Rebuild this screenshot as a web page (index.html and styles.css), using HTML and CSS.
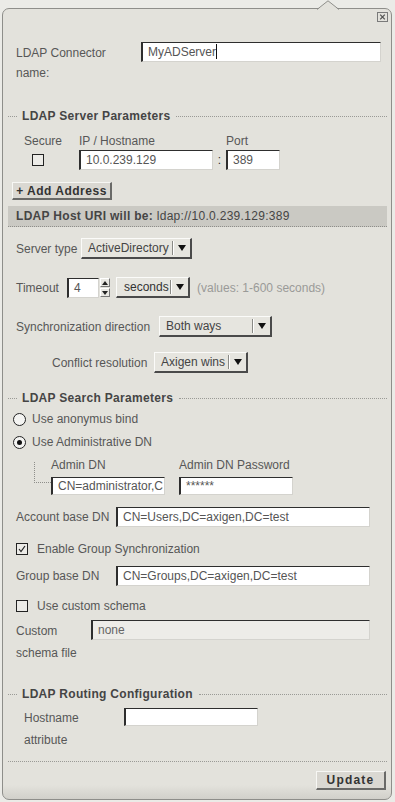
FILE: index.html
```html
<!DOCTYPE html>
<html lang="en">
<head>
  <meta charset="UTF-8" />
  <meta name="viewport" content="width=device-width, initial-scale=1.0"/>
  <title>LDAP Connector</title>
  <link rel="stylesheet" href="styles.css">
</head>
<body>
  <div class="panel">
    <svg class="notch" width="22" height="10" viewBox="0 0 22 10">
      <polygon points="0,10 11,0.8 22,10" fill="#e3e2dc"/>
      <polyline points="0,9.5 11,0.8 22,9.5" fill="none" stroke="#8e8e8a"/>
    </svg>

    <div class="close-row">
      <svg class="close-icon" width="11" height="10" viewBox="0 0 11 10">
        <rect x="0.5" y="0.5" width="10" height="9" fill="none" stroke="#7a7a7a"/>
        <path d="M3.2 2.6 L7.8 7.4 M7.8 2.6 L3.2 7.4" stroke="#555" stroke-width="1.3"/>
      </svg>
    </div>

    <div class="connector-row">
      <div class="connector-label">LDAP Connector name:</div>
      <div class="field connector-field">MyADServer<span class="caret"></span></div>
    </div>

    <div class="section-head server-head">LDAP Server Parameters</div>
    <div class="address-head">
      <span class="col-secure">Secure</span>
      <span class="col-host">IP / Hostname</span>
      <span class="col-port">Port</span>
    </div>
    <div class="address-row">
      <span class="col-secure"><span class="checkbox"></span></span>
      <div class="field col-host">10.0.239.129</div>
      <span class="colon">:</span>
      <div class="field port-field">389</div>
    </div>

    <button class="btn add-btn">+ Add Address</button>

    <div class="uri-bar"><b>LDAP Host URI will be:</b> ldap://10.0.239.129:389</div>

    <div class="form-row type-row">
      <span class="type-label">Server type</span>
      <div class="select type-select"><span class="select-text">ActiveDirectory</span><span class="select-sep"></span><span class="select-arrow"></span></div>
    </div>

    <div class="form-row timeout-row">
      <span class="timeout-label">Timeout</span>
      <div class="field timeout-field">4</div>
      <div class="spin">
        <span class="spin-btn"><span class="tri-up"></span></span>
        <span class="spin-btn"><span class="tri-down"></span></span>
      </div>
      <div class="select unit-select"><span class="select-text">seconds</span><span class="select-sep"></span><span class="select-arrow"></span></div>
      <span class="hint">(values: 1-600 seconds)</span>
    </div>

    <div class="form-row sync-row">
      <span class="sync-label">Synchronization direction</span>
      <div class="select sync-select"><span class="select-text">Both ways</span><span class="select-sep"></span><span class="select-arrow"></span></div>
    </div>

    <div class="form-row conflict-row">
      <span class="conflict-label">Conflict resolution</span>
      <div class="select conflict-select"><span class="select-text">Axigen wins</span><span class="select-sep"></span><span class="select-arrow"></span></div>
    </div>

    <div class="section-head search-head">LDAP Search Parameters</div>
    <div class="radio-row anon-row"><span class="radio"></span>Use anonymus bind</div>
    <div class="radio-row admin-row"><span class="radio checked"></span>Use Administrative DN</div>
    <div class="admin-block">
      <span class="tree-line"></span>
      <div class="admin-col">
        <span class="admin-label">Admin DN</span>
        <div class="field admin-field">CN=administrator,C</div>
      </div>
      <div class="admin-col">
        <span class="admin-label">Admin DN Password</span>
        <div class="field admin-field">******</div>
      </div>
    </div>

    <div class="form-row account-row">
      <span class="dn-label">Account base DN</span>
      <div class="field dn-field">CN=Users,DC=axigen,DC=test</div>
    </div>

    <div class="form-row check-row group-check-row"><span class="checkbox checked"><svg width="10" height="10" viewBox="0 0 10 10"><path d="M2 5 L4 7.5 L8 2" fill="none" stroke="#222" stroke-width="1.2"/></svg></span>Enable Group Synchronization</div>

    <div class="form-row group-row">
      <span class="dn-label">Group base DN</span>
      <div class="field dn-field">CN=Groups,DC=axigen,DC=test</div>
    </div>

    <div class="form-row check-row custom-check-row"><span class="checkbox"></span>Use custom schema</div>

    <div class="form-row custom-row">
      <span class="custom-label">Custom schema file</span>
      <div class="field disabled custom-field">none</div>
    </div>

    <div class="section-head routing-head">LDAP Routing Configuration</div>
    <div class="form-row hostname-row">
      <span class="hostname-label">Hostname attribute</span>
      <div class="field hostname-field"></div>
    </div>

    <div class="footer-line"></div>
    <div class="update-row">
      <button class="btn update-btn">Update</button>
    </div>
  </div>
</body>
</html>
```

FILE: styles.css
```css
*, *::before, *::after {
  box-sizing: border-box;
}

body {
  margin: 0;
  background: #ebebe7;
  font-family: "Liberation Sans", Arial, sans-serif;
  font-size: 12px;
  color: #575757;
}

.panel {
  position: relative;
  margin: 8px 0 0 2px;
  width: 390px;
  height: 792px;
  border: 1px solid #8e8e8a;
  border-radius: 7px;
  background: linear-gradient(#e3e2dc calc(100% - 14px), #d1d0ca);
  padding: 0 4px 0 5px;
}

.notch {
  position: absolute;
  top: -9px;
  left: 314px;
  display: block;
}

.close-row {
  height: 12px;
  padding-top: 3px;
  display: flex;
  justify-content: flex-end;
}

.close-icon {
  display: block;
  margin-right: -1px;
}

/* generic controls */

.field {
  height: 20px;
  background: #fff;
  border: 1px solid;
  border-color: #2e2e2e #d4d3ce #d4d3ce #2e2e2e;
  border-left-width: 2px;
  padding-left: 5px;
  line-height: 18px;
  color: #555;
  white-space: nowrap;
  overflow: hidden;
}

.field.disabled {
  background: #edece8;
  color: #666;
}

.caret {
  display: inline-block;
  width: 1px;
  height: 15px;
  background: #111;
  vertical-align: -3px;
}

.select {
  display: flex;
  align-items: center;
  height: 21px;
  background: #e6e5df;
  border: 1px solid;
  border-color: #fbfbf9 #4a4a4a #4a4a4a #fbfbf9;
  border-right-width: 2px;
  border-bottom-width: 2px;
  color: #444;
}

.select-text {
  flex: 1;
  padding-left: 6px;
  white-space: nowrap;
  overflow: hidden;
}

.select-sep {
  width: 1px;
  height: 14px;
  background: #8a8a86;
  box-shadow: 1px 0 #fff;
}

.select-arrow {
  width: 17px;
  display: flex;
  justify-content: center;
}

.select-arrow::before {
  content: "";
  border-left: 4px solid transparent;
  border-right: 4px solid transparent;
  border-top: 6px solid #111;
}

.btn {
  font-family: "Liberation Sans", Arial, sans-serif;
  font-size: 12px;
  font-weight: bold;
  color: #333;
  background: #dad8d2;
  border: 1px solid;
  border-color: #f7f7f4 #6a6a68 #6a6a68 #f7f7f4;
  border-right-width: 2px;
  border-bottom-width: 2px;
  padding: 0;
  cursor: pointer;
}

.checkbox {
  display: inline-flex;
  align-items: center;
  justify-content: center;
  width: 12px;
  height: 12px;
  border: 1px solid #222;
  background: #ecebe7;
}

.checkbox svg {
  display: block;
}

.radio {
  display: inline-block;
  width: 13px;
  height: 13px;
  border: 1px solid #222;
  border-radius: 50%;
  background: #f4f4f2;
  margin: 0 6px 0 5px;
  position: relative;
}

.radio.checked::after {
  content: "";
  position: absolute;
  left: 3px;
  top: 3px;
  width: 5px;
  height: 5px;
  border-radius: 50%;
  background: #111;
}

/* section headings */

.section-head {
  display: flex;
  align-items: center;
  height: 14px;
  font-weight: bold;
  color: #454545;
  letter-spacing: 0.3px;
}

.section-head::before {
  content: "";
  width: 9px;
  border-top: 1px dotted #9a9a96;
  margin-right: 5px;
}

.section-head::after {
  content: "";
  flex: 1;
  border-top: 1px dotted #9a9a96;
  margin-left: 6px;
}

/* connector name */

.connector-row {
  display: flex;
  align-items: flex-start;
  margin-top: 21px;
  padding-left: 8px;
}

.connector-label {
  width: 125px;
  line-height: 20px;
  padding-top: 1px;
}

.connector-field {
  width: 240px;
}

/* server parameters */

.server-head {
  margin-top: 26px;
}

.address-head,
.address-row {
  display: flex;
  align-items: center;
  padding-left: 16px;
}

.address-head {
  margin-top: 11px;
  line-height: 14px;
}

.address-row {
  margin-top: 2px;
}

.col-secure {
  width: 55px;
}

.address-row .col-secure {
  padding-left: 8px;
  display: flex;
}

.col-host {
  width: 134px;
}

.col-port {
  margin-left: 13px;
}

.colon {
  width: 13px;
  text-align: center;
  color: #333;
}

.port-field {
  width: 54px;
}

.add-btn {
  display: block;
  margin: 12px 0 0 4px;
  width: 100px;
  height: 18px;
  letter-spacing: 0.5px;
}

.uri-bar {
  margin-top: 6px;
  height: 21px;
  line-height: 20px;
  background: #cac9c3;
  border-bottom: 1px dotted #8e8e8a;
  padding-left: 8px;
  color: #454545;
  letter-spacing: 0.3px;
}

/* form rows */

.form-row {
  display: flex;
  align-items: center;
  padding-left: 8px;
}

.type-row {
  margin-top: 11px;
}

.type-label {
  width: 65px;
}

.type-select {
  width: 111px;
}

.timeout-row {
  margin-top: 18px;
}

.timeout-label {
  width: 51px;
}

.timeout-field {
  width: 32px;
}

.spin {
  display: flex;
  flex-direction: column;
  gap: 1px;
  margin-left: 1px;
  height: 20px;
  justify-content: center;
}

.spin-btn {
  width: 10px;
  height: 9px;
  background: #e9e8e3;
  border: 1px solid;
  border-color: #fff #777 #777 #fff;
  display: flex;
  align-items: center;
  justify-content: center;
}

.tri-up {
  border-left: 3px solid transparent;
  border-right: 3px solid transparent;
  border-bottom: 4px solid #222;
}

.tri-down {
  border-left: 3px solid transparent;
  border-right: 3px solid transparent;
  border-top: 4px solid #222;
}

.unit-select {
  width: 74px;
  margin-left: 6px;
}

.unit-select .select-text {
  padding-left: 7px;
  color: #333;
}

.hint {
  margin-left: 7px;
  color: #9a9a98;
}

.sync-row {
  margin-top: 18px;
}

.sync-label {
  width: 143px;
}

.sync-select {
  width: 113px;
}

.conflict-row {
  margin-top: 15px;
  padding-left: 44px;
}

.conflict-label {
  width: 102px;
}

.conflict-select {
  width: 94px;
}

/* search parameters */

.search-head {
  margin-top: 18px;
}

.radio-row {
  display: flex;
  align-items: center;
  height: 20px;
}

.anon-row {
  margin-top: 4px;
}

.admin-row {
  margin-top: 3px;
}

.admin-block {
  display: flex;
  margin: 6px 0 0 26px;
}

.tree-line {
  width: 17px;
  height: 21px;
  margin-top: 4px;
  border-left: 1px dotted #8e8e8a;
  border-bottom: 1px dotted #8e8e8a;
}

.admin-col {
  display: flex;
  flex-direction: column;
  width: 114px;
  margin-right: 14px;
}

.admin-label {
  line-height: 14px;
  margin-bottom: 5px;
}

.admin-field {
  height: 18px;
  line-height: 16px;
}

.account-row {
  margin-top: 12px;
}

.dn-label {
  width: 100px;
}

.dn-field {
  width: 254px;
}

.check-row {
  height: 20px;
}

.check-row .checkbox {
  margin-right: 9px;
}

.group-check-row {
  margin-top: 12px;
}

.group-row {
  margin-top: 7px;
}

.custom-check-row {
  margin-top: 10px;
}

.custom-row {
  margin-top: 4px;
  align-items: flex-start;
}

.custom-label {
  width: 75px;
  line-height: 22px;
}

.custom-field {
  width: 279px;
}

/* routing */

.routing-head {
  margin-top: 23px;
}

.hostname-row {
  margin-top: 6px;
  padding-left: 16px;
  align-items: flex-start;
}

.hostname-label {
  width: 100px;
  line-height: 22px;
}

.hostname-field {
  width: 134px;
  height: 18px;
  margin-top: 1px;
}

.footer-line {
  margin-top: 10px;
  border-top: 1px dotted #9a9a96;
}

.update-row {
  display: flex;
  justify-content: flex-end;
  margin-top: 9px;
  padding-right: 1px;
}

.update-btn {
  width: 70px;
  height: 19px;
  letter-spacing: 1.2px;
}
```
